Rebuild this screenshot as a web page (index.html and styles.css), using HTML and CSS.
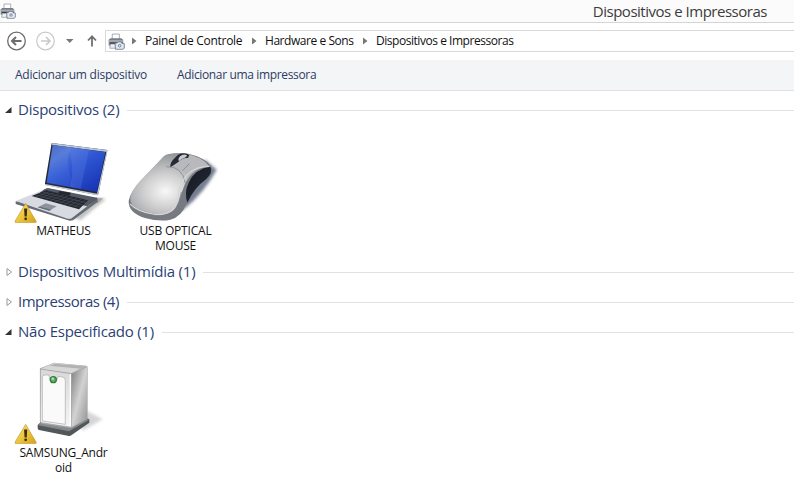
FILE: index.html
```html
<!DOCTYPE html>
<html lang="pt-BR">
<head>
    <meta charset="UTF-8">
    <title>Dispositivos e Impressoras</title>
    <link rel="stylesheet" href="styles.css">
</head>
<body>
    <svg width="0" height="0">
        <defs>
            <linearGradient id="yellow" x1="0" y1="0" x2="1" y2="1">
                <stop offset="0" stop-color="#f8e382"/>
                <stop offset="0.500" stop-color="#ecc63c"/>
                <stop offset="1" stop-color="#d3a11d"/>
            </linearGradient>
            <filter id="soft" x="-30%" y="-30%" width="160%" height="160%">
                <feGaussianBlur stdDeviation="5"/>
            </filter>
            <symbol id="printer" viewBox="0 0 48 48">
                <path d="M12 18V3h20v17z" fill="#fff" stroke="#868b93" stroke-width="2"/>
                <path d="M2 19l5-4h31l5 5v15H2z" fill="#777d88"/>
                <path d="M2 20h40v5H2z" fill="#a7acb5"/>
                <path d="M6 27h16v4H6z" fill="#30343c"/>
                <path d="M7 31h16l-2 12H5z" fill="#edf0f4" stroke="#8b9099" stroke-width="2"/>
                <path d="M20 29l6-1 3-3h8l2 4 7 1v13l-4 3H21z" fill="#dfe5f0" stroke="#596377" stroke-width="2"/>
                <circle cx="33" cy="36" r="6" fill="#6b7890" stroke="#fff" stroke-width="2"/>
                <circle cx="33" cy="36" r="2.500" fill="#dce6f5"/>
            </symbol>
            <symbol id="warning" viewBox="0 0 66 60">
                <path d="M33 2L64 55q0 3-3 3H4q-3 0-2-4z" fill="url(#yellow)" stroke="#c39a32" stroke-width="2"/>
                <path d="M28.500 17h9l-1.500 23h-6z" fill="#3a2c0c"/>
                <circle cx="33" cy="47" r="4" fill="#3a2c0c"/>
            </symbol>
        </defs>
    </svg>

    <header class="titlebar">
        <svg class="title-icon" width="16" height="16"><use href="#printer"/></svg>
        <h1 class="title">Dispositivos e Impressoras</h1>
    </header>

    <nav class="navbar">
        <svg width="105" height="38" viewBox="0 0 105 38" fill="none">
            <g stroke="#6c6c6c">
                <circle cx="16.500" cy="18" r="8.800" stroke-width="1.300"/>
                <path d="M21.500 18h-9M16 14l-4 4 4 4" stroke-width="2"/>
            </g>
            <g stroke="#c9c9c9">
                <circle cx="45.500" cy="18" r="8.800" stroke-width="1.200"/>
                <path d="M41 18h8.500M46 14l4 4-4 4" stroke-width="1.600"/>
            </g>
            <path d="M66 16h7.500l-3.750 4z" fill="#777"/>
            <path d="M92 23.500V14M88 17.500l4-4.200 4 4.200" stroke="#707070" stroke-width="1.800"/>
        </svg>
        <div class="address">
            <svg width="17" height="17"><use href="#printer"/></svg>
            <svg class="arrow" width="5" height="8"><path d="M0 0.500l4.500 3.500L0 7.500z"/></svg>
            <span class="crumb crumb-panel">Painel de Controle</span>
            <svg class="arrow" width="5" height="8"><path d="M0 0.500l4.500 3.500L0 7.500z"/></svg>
            <span class="crumb crumb-hardware">Hardware e Sons</span>
            <svg class="arrow" width="5" height="8"><path d="M0 0.500l4.500 3.500L0 7.500z"/></svg>
            <span class="crumb crumb-current">Dispositivos e Impressoras</span>
        </div>
    </nav>

    <div class="toolbar">
        <span class="command">Adicionar um dispositivo</span>
        <span class="command command-printer">Adicionar uma impressora</span>
    </div>

    <main>
        <section>
            <h2 class="group">
                <svg class="toggle" width="8" height="8"><path class="open" d="M6.500 1V7H0z"/></svg>
                <span>Dispositivos (2)</span>
            </h2>
            <div class="devices">
                <div class="device">
                    <svg width="112" height="98" viewBox="6 -15 336 294">
                        <defs>
                            <linearGradient id="screen" x1="0" y1="0" x2="0.800" y2="1">
                                <stop offset="0" stop-color="#3354b4"/>
                                <stop offset="0.250" stop-color="#4c72d6"/>
                                <stop offset="0.500" stop-color="#3058d4"/>
                                <stop offset="1" stop-color="#1733b4"/>
                            </linearGradient>
                            <linearGradient id="glare" x1="0" y1="0" x2="0" y2="1">
                                <stop offset="0" stop-color="#8ea9e4" stop-opacity="0.250"/>
                                <stop offset="1" stop-color="#5a84e8" stop-opacity="0.100"/>
                            </linearGradient>
                        </defs>
                        <path d="M200 262l88-58 14 4-75 62z" fill="#777" opacity="0.450" filter="url(#soft)"/>
                        <path d="M272 202l22 3-18 16z" fill="#8c8580" opacity="0.600"/>
                        <path d="M32 214v8l162 50 10-1 74-55v-10z" fill="#656b74"/>
                        <path d="M32 213L128 174l150 31-76 58q-6 5-14 3z" fill="#d7dbe1"/>
                        <path d="M118 178l10-4 148 29q4 4-3 8l-27 18-151-33z" fill="#555b65"/>
                        <path d="M80 198l44-17 125 30-27 27z" fill="#23262d"/>
                        <g stroke="#596170" stroke-width="1.300">
                            <path d="M90 194l137 38M101 190l134 36M112 186l130 32"/>
                            <path d="M91 201l43-16M105 205l43-17M119 209l43-18M133 213l43-19M147 217l43-20M161 221l43-21M175 225l42-21M189 229l41-22M204 233l37-22"/>
                        </g>
                        <path d="M122 220l33 9-22 13-35-10z" fill="#8c939e"/>
                        <path d="M98 232l35 10 6-3-34-9z" fill="#646b76"/>
                        <path d="M163 183l34 5-3 9-35-7z" fill="#24272d"/>
                        <path d="M140 39l167 21-27 132q-1 4-5 3l-152-30q-4-1-3-5z" fill="#252a35"/>
                        <path d="M139 39l168 21-2 6-163-21z" fill="#b8c6d9"/>
                        <path d="M143 45l158 21-25 120-151-28z" fill="url(#screen)"/>
                        <path d="M143 45l55 7q-22 55 11 122l-84-16z" fill="url(#glare)"/>
                        <path d="M190 51l62 8-25 118-31-6q14-63-6-120z" fill="#7193ee" opacity="0.220"/>
                        <path d="M121 162l155 29 28-125 4-5-28 133q-1 3-5 2l-153-30z" fill="#bdc8d7"/>
                        <use href="#warning" x="28" y="218" width="68" height="62"/>
                    </svg>
                    <div class="name">MATHEUS</div>
                </div>
                <div class="device">
                    <svg width="112" height="98" viewBox="-3 -30 336 294">
                        <defs>
                            <radialGradient id="palm" cx="0.450" cy="0.620" r="0.600">
                                <stop offset="0" stop-color="#f8f8f8"/>
                                <stop offset="0.450" stop-color="#d0d0d1"/>
                                <stop offset="1" stop-color="#96989b"/>
                            </radialGradient>
                            <linearGradient id="side" x1="0" y1="0" x2="1" y2="1">
                                <stop offset="0" stop-color="#15181f"/>
                                <stop offset="1" stop-color="#252c3d"/>
                            </linearGradient>
                        </defs>
                        <path d="M192 222q60-48 98-118l-35-30-90 160z" fill="#2c3753" opacity="0.650" filter="url(#soft)"/>
                        <path d="M150 58q17-6 55-2 50 11 68 38 5 18-17 37-38 27-58 77-13 38-47 46-31 7-76-5-50-15-49-51 4-27 42-65 29-32 62-66 8-8 20-9z" fill="#777a80"/>
                        <path d="M270 94q11 18-12 39-35 25-56 70-10-32 4-60 18-40 64-49z" fill="url(#side)"/>
                        <path d="M146 57q20-5 55 0 46 10 65 35-53 12-72 57-9 22-19 54-12 32-44 35-35 2-75-15-28-13-25-38 5-24 43-62 34-34 57-59 7-6 15-7z" fill="url(#palm)"/>
                        <path d="M201 57q45 10 65 35-40 6-61 34-14-28-44-29 16-27 40-40z" fill="#b7b9bd"/>
                        <path d="M139 95q47-3 57 49M188 107l20-21" fill="none" stroke="#74777c" stroke-width="2"/>
                        <path d="M30 207q23 24 73 31 42 5 61-20 10-16 13-50 8-37 34-57 20-16 58-17" fill="none" stroke="#d4d6d8" stroke-width="4"/>
                        <path d="M28 208q25 29 79 34 42 3 61-23 12-19 16-48" fill="none" stroke="#7c7f83" stroke-width="2"/>
                        <path d="M174 59q20-9 34 1l-4 9q-17-2-30 13l-22 14q-4-8 7-22z" fill="#252a35"/>
                        <path d="M181 63q10-8 20-2-1 7-9 8-9 2-15 10-5-7 4-16z" fill="#c6cbd2"/>
                    </svg>
                    <div class="name">USB OPTICAL<br>MOUSE</div>
                </div>
            </div>
        </section>

        <section>
            <h2 class="group">
                <svg class="toggle" width="8" height="8"><path class="closed" d="M2 0.500L6.500 4 2 7.500z"/></svg>
                <span>Dispositivos Multimídia (1)</span>
            </h2>
        </section>

        <section>
            <h2 class="group">
                <svg class="toggle" width="8" height="8"><path class="closed" d="M2 0.500L6.500 4 2 7.500z"/></svg>
                <span class="group-printers">Impressoras (4)</span>
            </h2>
        </section>

        <section>
            <h2 class="group">
                <svg class="toggle" width="8" height="8"><path class="open" d="M6.500 1V7H0z"/></svg>
                <span>Não Especificado (1)</span>
            </h2>
            <div class="devices">
                <div class="device">
                    <svg width="112" height="98" viewBox="6 -9 336 294">
                        <defs>
                            <linearGradient id="tower" x1="0" y1="0" x2="1" y2="1">
                                <stop offset="0" stop-color="#7e7e7e"/>
                                <stop offset="0.500" stop-color="#d2d2d2"/>
                                <stop offset="1" stop-color="#929292"/>
                            </linearGradient>
                            <linearGradient id="front" x1="0" y1="0" x2="0" y2="1">
                                <stop offset="0" stop-color="#d8d8d8"/>
                                <stop offset="1" stop-color="#f5f5f5"/>
                            </linearGradient>
                        </defs>
                        <path d="M230 175l63 33-62 35z" fill="#888" opacity="0.350" filter="url(#soft)"/>
                        <path d="M98 225l9-8 90 13 49-26 7 4v10l-53 37q-5 4-12 2l-86-17q-4-2-4-6z" fill="#52575a"/>
                        <path d="M100 226l92 18 59-34v-3l-56 23-88-14z" fill="#858a8c"/>
                        <path d="M105 55l42-17 97 9q4 1 4 6v154l-51 28-86-14q-5-1-5-6z" fill="#aaa"/>
                        <path d="M199 72l47-20v153l-47 27z" fill="url(#tower)"/>
                        <path d="M106 57l41-18 96 9-45 22z" fill="#d7d7d7"/>
                        <path d="M149 41l92 7-14 8-94-9z" fill="#b2b2b2"/>
                        <path d="M106 57l93 14v161l-89-14q-4-1-4-6z" fill="url(#front)" stroke="#888" stroke-width="1.500"/>
                        <path d="M112 82q0-8 8-7h12q2 22 13 22t14-18l14 2q8 2 8 10v132l-69-10z" fill="#fafafa" stroke="#a9a9a9" stroke-width="2"/>
                        <path d="M196 72v156" stroke="#fff" stroke-width="4"/>
                        <circle cx="145" cy="89" r="11" fill="#397947"/>
                        <circle cx="145" cy="89" r="7" fill="#54b85b"/>
                        <circle cx="143" cy="86" r="3.500" fill="#b5eeb0"/>
                        <use href="#warning" x="28" y="221" width="68" height="62"/>
                    </svg>
                    <div class="name">SAMSUNG_Andr<br>oid</div>
                </div>
            </div>
        </section>
    </main>
</body>
</html>
```
FILE: styles.css
```css
* {
    box-sizing: border-box;
}

body {
    margin: 0;
    height: 498px;
    overflow: hidden;
    background: #fff;
    color: #111;
    font-family: "Open Sans", "Noto Sans", sans-serif;
    font-size: 12px;
}

svg {
    display: block;
    flex: none;
}

/* Title bar */
.titlebar {
    display: flex;
    justify-content: space-between;
    height: 23px;
    padding-right: 27px;
    background: #fbfbfb;
    border-bottom: 1px solid #d5d5d5;
}

.title-icon {
    margin-top: 3px;
}

.title {
    margin: 0;
    color: #3c3c3c;
    font-size: 15px;
    font-weight: normal;
    line-height: 23px;
    letter-spacing: -0.48px;
}

/* Navigation and address */
.navbar {
    display: flex;
    height: 37px;
}

.address {
    display: flex;
    flex: 1;
    align-items: center;
    height: 22px;
    margin-top: 7px;
    padding-left: 2px;
    border: 1px solid #d9d9d9;
    border-right: 0;
    line-height: 20px;
    white-space: nowrap;
}

.arrow {
    margin: 0 8px 0 7px;
    fill: #777;
}

.crumb {
    letter-spacing: -0.3px;
}

.crumb-panel {
    width: 100px;
}

.crumb-hardware {
    width: 91px;
    letter-spacing: -0.45px;
}

.crumb-current {
    letter-spacing: -0.46px;
}

/* Command bar */
.toolbar {
    display: flex;
    gap: 30px;
    height: 31px;
    padding-left: 15px;
    background: #f4f5f7;
    border-bottom: 1px solid #dfe1e4;
    color: #2b3c61;
    line-height: 30px;
    white-space: nowrap;
}

.command {
    letter-spacing: -0.23px;
}

.command-printer {
    letter-spacing: -0.35px;
}

/* Device groups */
main {
    padding-top: 4px;
}

.group {
    display: flex;
    align-items: center;
    height: 30px;
    margin: 0;
    padding-left: 5px;
    color: #2b3f75;
    font-size: 15px;
    font-weight: normal;
    line-height: 28px;
    letter-spacing: -0.23px;
    white-space: nowrap;
}

.group span {
    padding-bottom: 2px;
}

.group-printers {
    letter-spacing: -0.48px;
}

.group::after {
    content: "";
    flex: 1;
    height: 1px;
    margin-left: 8px;
    background: #e0e1e3;
}

.toggle {
    margin-right: 5px;
}

.open {
    fill: #333;
}

.closed {
    fill: #fff;
    stroke: #999;
}

.devices {
    display: flex;
    height: 132px;
    padding-left: 7px;
}

.device {
    width: 112px;
    text-align: center;
}

.name {
    padding-left: 1px;
    line-height: 15px;
    letter-spacing: -0.2px;
}
```
